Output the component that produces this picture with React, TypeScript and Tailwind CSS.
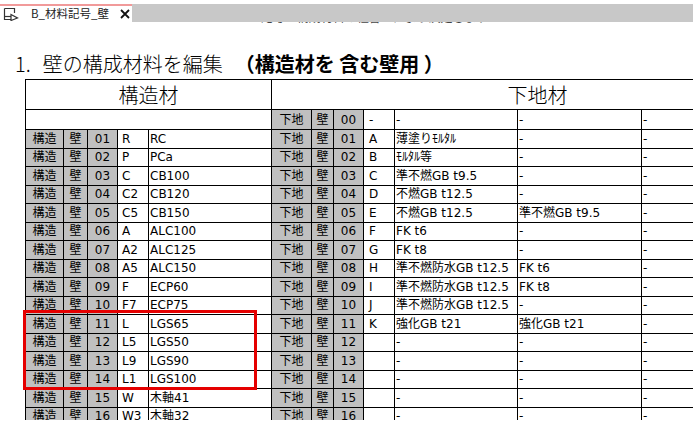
const cellFont = "font-['DejaVu_Sans','Noto_Sans_CJK_JP',sans-serif] text-[12px] text-black";

const structRows = [
  ['01', 'R', 'RC'],
  ['02', 'P', 'PCa'],
  ['03', 'C', 'CB100'],
  ['04', 'C2', 'CB120'],
  ['05', 'C5', 'CB150'],
  ['06', 'A', 'ALC100'],
  ['07', 'A2', 'ALC125'],
  ['08', 'A5', 'ALC150'],
  ['09', 'F', 'ECP60'],
  ['10', 'F7', 'ECP75'],
  ['11', 'L', 'LGS65'],
  ['12', 'L5', 'LGS50'],
  ['13', 'L9', 'LGS90'],
  ['14', 'L1', 'LGS100'],
  ['15', 'W', '木軸41'],
  ['16', 'W3', '木軸32'],
];

const baseRows = [
  ['01', 'A', '薄塗りﾓﾙﾀﾙ', '-'],
  ['02', 'B', 'ﾓﾙﾀﾙ等', '-'],
  ['03', 'C', '準不燃GB t9.5', '-'],
  ['04', 'D', '不燃GB t12.5', '-'],
  ['05', 'E', '不燃GB t12.5', '準不燃GB t9.5'],
  ['06', 'F', 'FK t6', '-'],
  ['07', 'G', 'FK t8', '-'],
  ['08', 'H', '準不燃防水GB t12.5', 'FK t6'],
  ['09', 'I', '準不燃防水GB t12.5', 'FK t8'],
  ['10', 'J', '準不燃防水GB t12.5', '-'],
  ['11', 'K', '強化GB t21', '強化GB t21'],
  ['12', '', '-', '-'],
  ['13', '', '-', '-'],
  ['14', '', '-', '-'],
  ['15', '', '-', '-'],
  ['16', '', '-', '-'],
];

function Gray({ children }: { children: React.ReactNode }) {
  return (
    <div className="h-[18.5px] bg-[#c0c0c0] border-r border-b border-black flex items-center justify-center leading-none">
      {children}
    </div>
  );
}

function White({ children, pad = 'pl-[1px]' }: { children?: React.ReactNode; pad?: string }) {
  return (
    <div className={`h-[18.5px] bg-white border-r border-b border-black flex items-center leading-none whitespace-nowrap overflow-hidden ${pad}`}>
      {children}
    </div>
  );
}

function BaseCells({ row }: { row: string[] }) {
  return (
    <>
      <Gray>下地</Gray>
      <Gray>壁</Gray>
      <Gray>{row[0]}</Gray>
      <White pad="pl-[5px]">{row[1]}</White>
      <White>{row[2]}</White>
      <White>{row[3]}</White>
      <White>-</White>
    </>
  );
}

function SheetIcon() {
  return (
    <svg width="16" height="14" viewBox="0 0 16 14" fill="none" stroke="#333" strokeWidth="1.2" className="shrink-0">
      <path d="M1.5 1.5 H11.5 V6" />
      <path d="M1.5 1.5 V12.5 H8" />
      <path d="M1.5 9.5 H8" />
      <path d="M8 7.5 L14.5 11 L8 13.5 Z" fill="white" />
    </svg>
  );
}

export default function App() {
  return (
    <div className="w-[700px] h-[427px] bg-white overflow-hidden relative">
      <div className="h-[4px]" />
      <div className="flex h-[18px] w-[693px]">
        <div className="w-[132px] shrink-0 bg-white border-t-2 border-[#f19a9a] flex items-center pl-[3px] whitespace-nowrap font-['Noto_Sans_CJK_JP',sans-serif] text-[11.5px] text-[#222]">
          <SheetIcon />
          <span className="ml-[12px] leading-none">B_材料記号_壁</span>
          <svg width="10" height="10" viewBox="0 0 10 10" stroke="#111" strokeWidth="1.8" className="ml-[11px] shrink-0">
            <path d="M1 1 L9 9 M9 1 L1 9" />
          </svg>
        </div>
        <div className="flex-1 bg-[#c8c8c8]" />
      </div>

      <div className="w-[693px] h-[398px] overflow-hidden relative">
        <div className="h-[5px] overflow-hidden pl-[246px]">
          <div className="mt-[-12px] leading-[14px] text-[12px] text-[#444] whitespace-nowrap font-['Noto_Sans_CJK_JP',sans-serif]">
            ※ 記号は構成材料の組合せにより決定します
          </div>
        </div>

        <div className="pt-[25px] pb-[3px] pl-[15px] leading-[24px] text-[20px] text-black whitespace-nowrap font-['Noto_Sans_CJK_JP',sans-serif]">
          <span className="font-light">1.</span>
          <span className="ml-[12px] font-light">壁の構成材料を編集</span>
          <span className="ml-[12px] font-bold">（構造材を 含む壁用 ）</span>
        </div>

        <div className={`ml-[25px] w-[778px] grid grid-cols-[38px_24px_30px_31px_123px_40px_22px_30px_31px_123px_124px_162px] border-t border-l border-black ${cellFont}`}>
          <div className="col-span-5 h-[30px] border-r border-b border-black flex items-center justify-center text-[20px] font-light font-['Noto_Sans_CJK_JP',sans-serif]">
            構造材
          </div>
          <div className="col-span-7 h-[30px] border-r border-b border-black flex items-center justify-center text-[20px] font-light font-['Noto_Sans_CJK_JP',sans-serif]">
            下地材
          </div>

          <div className="col-span-5 h-[20px] border-r border-b border-black" />
          <div className="h-[20px] bg-[#c0c0c0] border-r border-b border-black flex items-center justify-center">下地</div>
          <div className="h-[20px] bg-[#c0c0c0] border-r border-b border-black flex items-center justify-center">壁</div>
          <div className="h-[20px] bg-[#c0c0c0] border-r border-b border-black flex items-center justify-center">00</div>
          <div className="h-[20px] border-r border-b border-black flex items-center pl-[5px]">-</div>
          <div className="h-[20px] border-r border-b border-black flex items-center pl-[1px]">-</div>
          <div className="h-[20px] border-r border-b border-black flex items-center pl-[1px]">-</div>
          <div className="h-[20px] border-r border-b border-black flex items-center pl-[1px]">-</div>

          {structRows.map((row, i) => (
            <div key={row[0]} className="contents">
              <Gray>構造</Gray>
              <Gray>壁</Gray>
              <Gray>{row[0]}</Gray>
              <White pad="pl-[4px]">{row[1]}</White>
              <White>{row[2]}</White>
              <BaseCells row={baseRows[i]} />
            </div>
          ))}
        </div>

        <div className="absolute left-[23px] top-[288px] w-[234px] h-[80px] border-[3px] border-[#e50000]" />
      </div>
    </div>
  );
}
